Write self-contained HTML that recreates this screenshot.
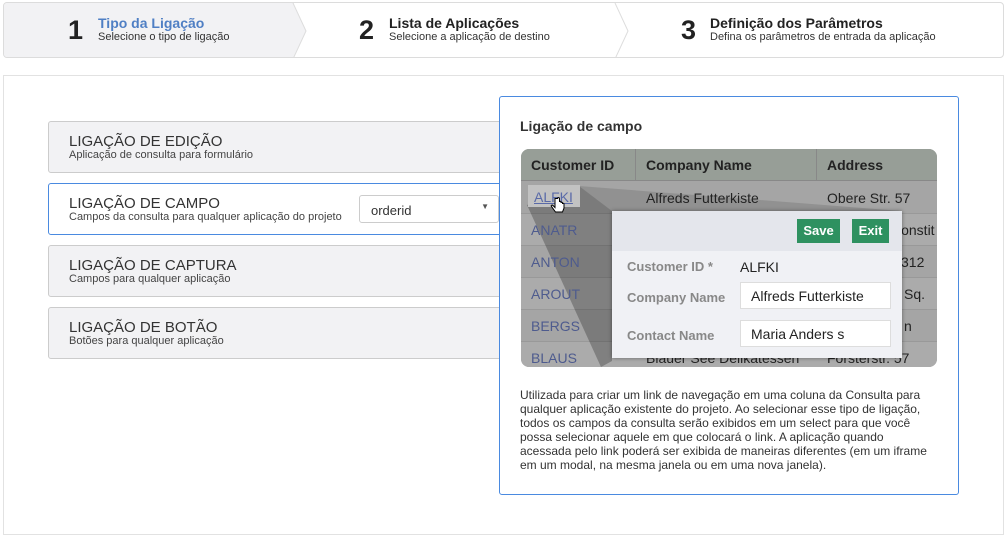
<!DOCTYPE html>
<html><head><meta charset="utf-8"><style>
*{box-sizing:border-box;margin:0;padding:0}
body{width:1008px;height:515px;background:#fff;font-family:"Liberation Sans",sans-serif;position:relative;overflow:hidden;color:#333}
.a{position:absolute}
.steps{left:3px;top:2px;width:1001px;height:56px;border:1px solid #dcdcdc;border-radius:4px;background:#fff;overflow:hidden}
.num{position:absolute;font-size:27px;font-weight:bold;color:#222;top:12px}
.st{position:absolute;font-size:14px;font-weight:bold;color:#222;top:12px}
.ss{position:absolute;font-size:11px;color:#333;top:28px}
.item{left:48px;width:460px;height:52px;border:1px solid #ccc;border-radius:3px;background:#f2f2f4}
.item .t{position:absolute;left:20px;top:11px;font-size:15px;color:#333}
.item .d{position:absolute;left:20px;top:27px;font-size:11px;color:#444}
</style></head><body>
<div class="a steps">
 <div class="a" style="left:0;top:0;width:290px;height:56px;background:#f2f2f4"></div>
 <svg class="a" style="left:280px;top:0" width="30" height="56"><polyline points="9,0 22,28 9,56" fill="#f2f2f4" stroke="#ddd"/></svg>
 <svg class="a" style="left:602px;top:0" width="30" height="56"><polyline points="9,0 22,28 9,56" fill="#fff" stroke="#ddd"/></svg>
 <div class="num" style="left:64px">1</div><div class="st" style="left:94px;color:#4f7fc4">Tipo da Ligação</div><div class="ss" style="left:94px">Selecione o tipo de ligação</div>
 <div class="num" style="left:355px">2</div><div class="st" style="left:385px">Lista de Aplicações</div><div class="ss" style="left:385px">Selecione a aplicação de destino</div>
 <div class="num" style="left:677px">3</div><div class="st" style="left:706px">Definição dos Parâmetros</div><div class="ss" style="left:706px">Defina os parâmetros de entrada da aplicação</div>
</div>
<div class="a" style="left:3px;top:75px;width:1001px;height:460px;border:1px solid #e2e2e2"></div>

<div class="a item" style="top:121px"><div class="t">LIGAÇÃO DE EDIÇÃO</div><div class="d">Aplicação de consulta para formulário</div></div>
<div class="a item" style="top:183px;background:#fff;border-color:#4a8ae0"><div class="t">LIGAÇÃO DE CAMPO</div><div class="d">Campos da consulta para qualquer aplicação do projeto</div>
 <div class="a" style="left:310px;top:11px;width:140px;height:28px;border:1px solid #ccc;border-radius:3px;font-size:13px;padding:7px 11px">orderid<span class="a" style="right:9px;top:6px;font-size:8px;color:#555">▼</span></div></div>
<div class="a item" style="top:245px"><div class="t">LIGAÇÃO DE CAPTURA</div><div class="d">Campos para qualquer aplicação</div></div>
<div class="a item" style="top:307px"><div class="t">LIGAÇÃO DE BOTÃO</div><div class="d">Botões para qualquer aplicação</div></div>

<div class="a" style="left:499px;top:96px;width:460px;height:399px;border:1px solid #4a8ae0;border-radius:3px;background:#fff">
 <div class="a" style="left:20px;top:21px;font-size:14px;font-weight:bold;color:#333">Ligação de campo</div>
 <div class="a" style="left:21px;top:52px;width:416px;height:218px;border-radius:8px;overflow:hidden;background:#aaa;font-size:14px">
  <div class="a" style="left:0;top:0;width:416px;height:32px;background:#979e97;border-bottom:1px solid #888"></div>
  <div class="a" style="left:114px;top:0;width:1px;height:32px;background:#888"></div>
  <div class="a" style="left:295px;top:0;width:1px;height:32px;background:#888"></div>
  <div class="a" style="left:10px;top:8px;font-weight:bold;color:#222">Customer ID</div>
  <div class="a" style="left:125px;top:8px;font-weight:bold;color:#222">Company Name</div>
  <div class="a" style="left:306px;top:8px;font-weight:bold;color:#222">Address</div>
  <div class="a" style="left:0;top:32px;width:416px;height:32px;background:#a5a5a5"></div>
  <div class="a" style="left:0;top:64px;width:416px;height:32px;background:#ababab;border-top:1px solid #999"></div>
  <div class="a" style="left:0;top:96px;width:416px;height:32px;background:#a5a5a5;border-top:1px solid #999"></div>
  <div class="a" style="left:0;top:128px;width:416px;height:32px;background:#ababab;border-top:1px solid #999"></div>
  <div class="a" style="left:0;top:160px;width:416px;height:32px;background:#a5a5a5;border-top:1px solid #999"></div>
  <div class="a" style="left:0;top:192px;width:416px;height:32px;background:#ababab;border-top:1px solid #999"></div>
  <svg class="a" style="left:0;top:0" width="416" height="218">
   <polygon points="58,37 381,62 91,62" fill="#000" opacity=".12"/>
   <polygon points="6,56 58,37 91,62 91,212 80,218" fill="#000" opacity=".25"/>
  </svg>
  <div class="a" style="left:7px;top:36px;width:52px;height:22px;background:#c2c2c2"></div>
  <div class="a" style="left:13px;top:40px;color:#5a6aa8;text-decoration:underline">ALFKI</div>
  <svg class="a" style="left:29px;top:48px" width="16" height="18"><path d="M5 1.5v9l-2-2c-1-1-2.5 0-1.5 1l4 5.5h7l1.5-4v-4c0-1-1.5-1-1.5 0v-1c0-1-1.5-1-1.5 0v-1c0-1-1.5-1-1.5 0v-3.5c0-1.2-2-1.2-2 0z" fill="#fff" stroke="#000" stroke-width="1"/></svg>
  <div class="a" style="left:125px;top:41px;color:#222">Alfreds Futterkiste</div>
  <div class="a" style="left:306px;top:41px;color:#222">Obere Str. 57</div>
  <div class="a" style="left:10px;top:73px;color:#4e5b8e">ANATR</div>
  <div class="a" style="left:10px;top:105px;color:#4e5b8e">ANTON</div>
  <div class="a" style="left:10px;top:137px;color:#4e5b8e">AROUT</div>
  <div class="a" style="left:10px;top:169px;color:#4e5b8e">BERGS</div>
  <div class="a" style="left:10px;top:201px;color:#4e5b8e">BLAUS</div>
  <div class="a" style="left:125px;top:201px;color:#222">Blauer See Delikatessen</div>
  <div class="a" style="left:306px;top:201px;color:#222">Forsterstr. 57</div>
  <div class="a" style="left:370px;top:73px;color:#222">Constit</div>
  <div class="a" style="left:380px;top:105px;color:#222">312</div>
  <div class="a" style="left:383px;top:137px;color:#222">Sq.</div>
  <div class="a" style="left:383px;top:169px;color:#222">n</div>
  <div class="a" style="left:91px;top:62px;width:290px;height:147px;background:#f0f1f5;box-shadow:0 0 4px rgba(0,0,0,.4)">
   <div class="a" style="left:0;top:0;width:290px;height:40px;background:#e4e6ec"></div>
   <div class="a" style="left:185px;top:8px;width:43px;height:24px;background:#2e9160;color:#fff;font-weight:bold;font-size:13px;text-align:center;line-height:24px">Save</div>
   <div class="a" style="left:240px;top:8px;width:37px;height:24px;background:#2e9160;color:#fff;font-weight:bold;font-size:13px;text-align:center;line-height:24px">Exit</div>
   <div class="a" style="left:15px;top:48px;font-weight:bold;color:#888;font-size:13px">Customer ID *</div>
   <div class="a" style="left:128px;top:48px;color:#222;font-size:14px">ALFKI</div>
   <div class="a" style="left:15px;top:79px;font-weight:bold;color:#888;font-size:13px">Company Name</div>
   <div class="a" style="left:128px;top:71px;width:151px;height:27px;background:#fff;border:1px solid #ddd;padding:5px 10px;color:#222;font-size:14px">Alfreds Futterkiste</div>
   <div class="a" style="left:15px;top:117px;font-weight:bold;color:#888;font-size:13px">Contact Name</div>
   <div class="a" style="left:128px;top:109px;width:151px;height:27px;background:#fff;border:1px solid #ddd;padding:5px 10px;color:#222;font-size:14px">Maria Anders s</div>
  </div>
 </div>
 <div class="a" style="left:20px;top:291px;width:408px;font-size:12px;line-height:14px;color:#333">Utilizada para criar um link de navegação em uma coluna da Consulta para qualquer aplicação existente do projeto. Ao selecionar esse tipo de ligação, todos os campos da consulta serão exibidos em um select para que você possa selecionar aquele em que colocará o link. A aplicação quando acessada pelo link poderá ser exibida de maneiras diferentes (em um iframe em um modal, na mesma janela ou em uma nova janela).</div>
</div>
</body></html>
